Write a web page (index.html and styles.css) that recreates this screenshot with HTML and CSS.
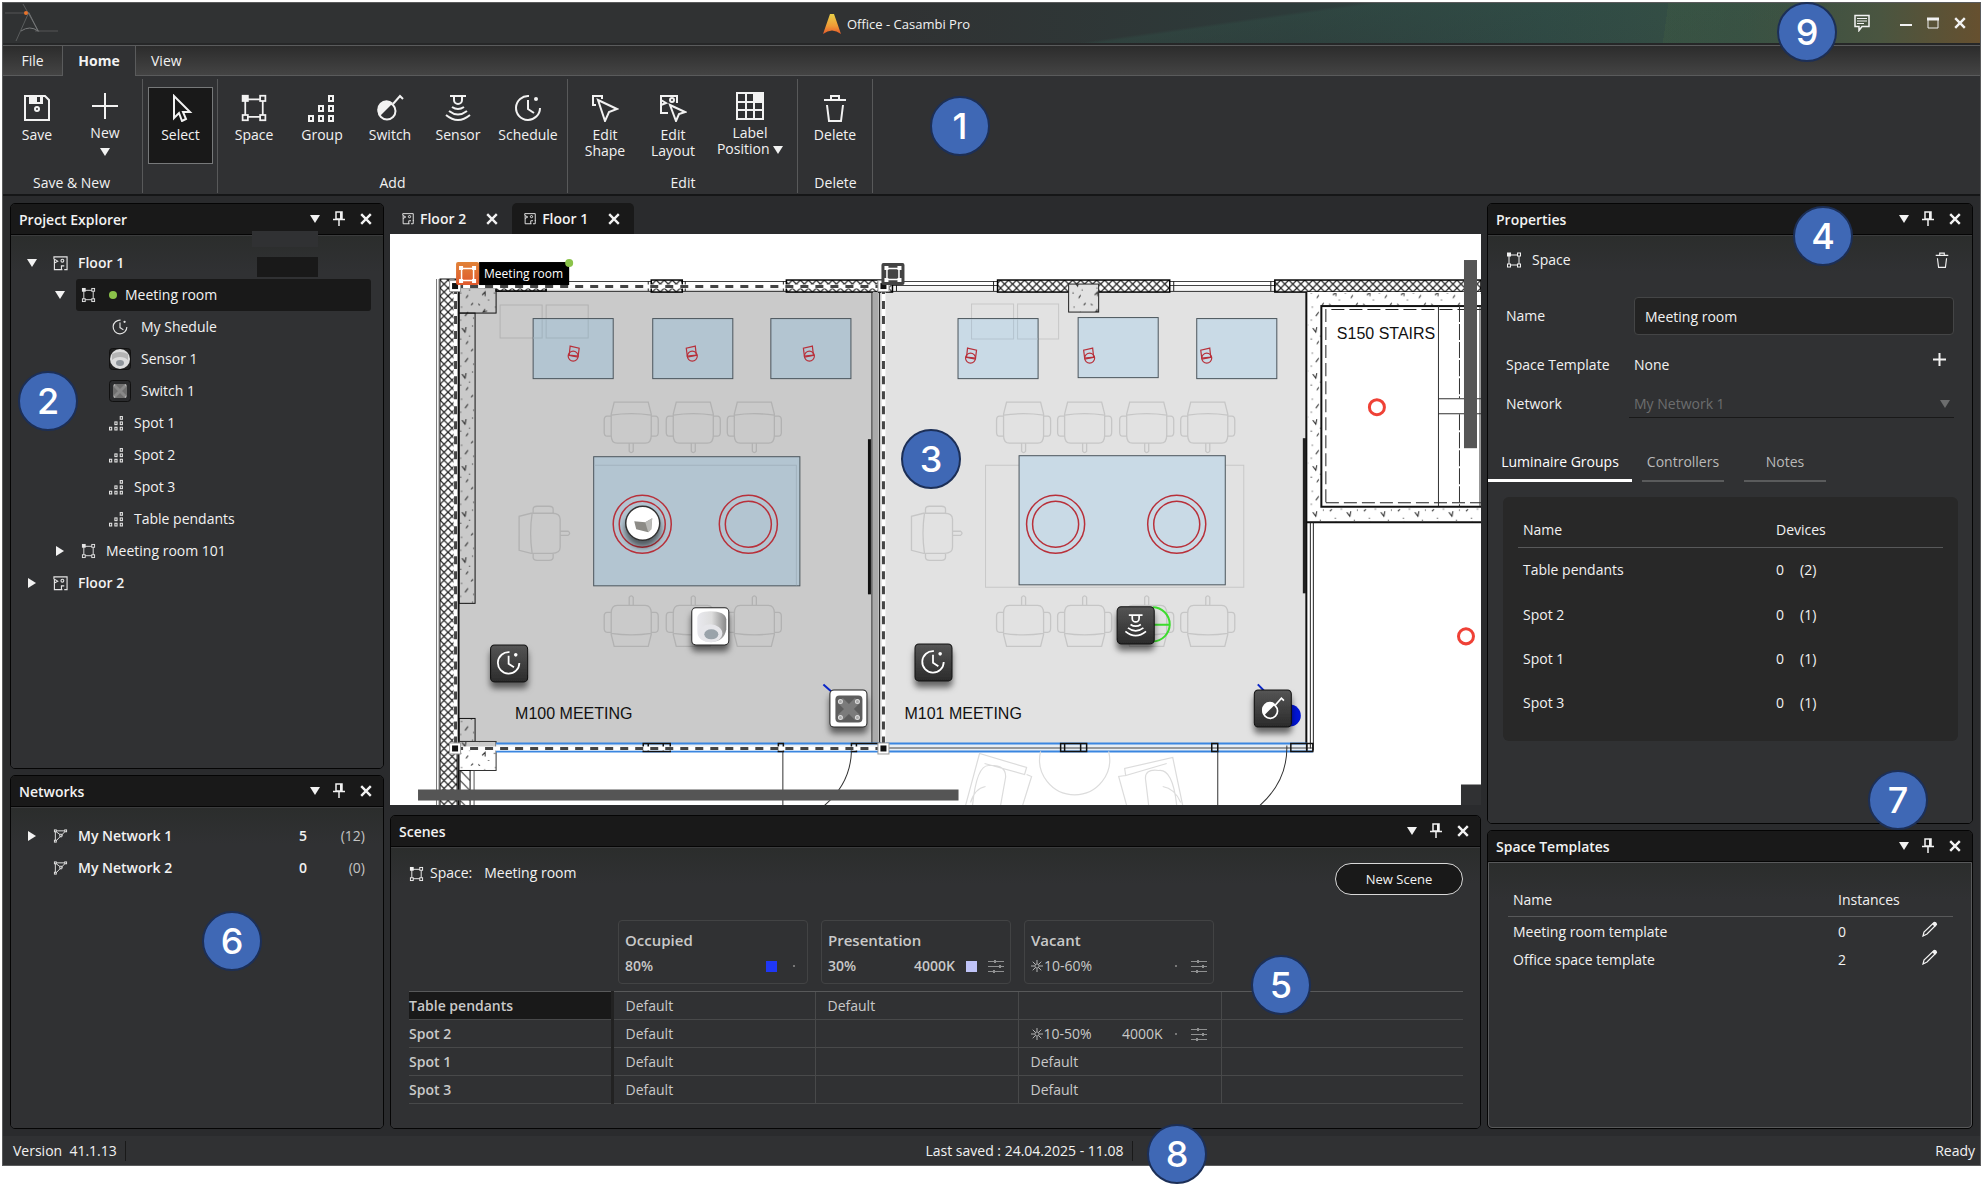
FILE: index.html
```html
<!DOCTYPE html>
<html lang="en">
<head>
<meta charset="utf-8">
<meta name="viewport" content="width=device-width, initial-scale=1">
<title>Office - Casambi Pro</title>
<link rel="stylesheet" href="styles.css">
</head>
<body>
<svg class="defs" aria-hidden="true">
  <symbol id="i-space" viewBox="0 0 16 16"><g fill="none" stroke="currentColor"><path d="M3 3H13V13H3Z" stroke-width="1"/></g><g fill="#303133" stroke="currentColor"><rect x="11.5" y="1" width="3" height="3"/><rect x="1.500" y="12" width="3" height="3"/><rect x="11.500" y="12" width="3" height="3"/></g><rect x="1" y=".5" width="4" height="4" fill="currentColor"/></symbol>
  <symbol id="i-group" viewBox="0 0 28 28"><g fill="none" stroke="currentColor" stroke-width="2"><rect x="21" y="2" width="4" height="5"/><rect x="21" y="12" width="4" height="5"/><rect x="11" y="12" width="4" height="5"/><rect x="1" y="22" width="4" height="5"/><rect x="11" y="22" width="4" height="5"/><rect x="21" y="22" width="4" height="5"/></g></symbol>
  <symbol id="i-clock" viewBox="0 0 28 28"><g fill="none" stroke="currentColor" stroke-width="2"><path d="M15 2A12 12 0 1 0 26 14"/><path d="M14 6V15L20 19"/></g><circle cx="22" cy="5" r="2" fill="currentColor"/></symbol>
  <symbol id="i-switch" viewBox="0 0 28 28"><path d="M17 9A9 9 0 1 0 4 22Z" fill="currentColor"/><circle cx="11" cy="17" r="8.500" fill="none" stroke="currentColor" stroke-width="2"/><path d="M17 10L24 2L27 5" fill="none" stroke="currentColor" stroke-width="2"/></symbol>
  <symbol id="i-sensor" viewBox="0 0 28 28"><g fill="none" stroke="currentColor" stroke-width="2"><path d="M6 2H22M10 3V6A4 4 0 0 0 18 6V3M8 13Q14 17 20 13M5 17Q14 24 23 17M2 21Q14 31 26 21"/></g></symbol>
  <symbol id="i-floor" viewBox="0 0 16 16"><g fill="none" stroke="currentColor" stroke-width="1.200"><path d="M1 4V1.500H15V11M10 15H1.500V4L5 6L1.500 8M9 15V11H12M15 10V15H12"/><circle cx="10" cy="5.500" r="1.500"/></g></symbol>
  <symbol id="i-net" viewBox="0 0 16 16"><g fill="none" stroke="currentColor"><rect x="1.500" y="1.500" width="2" height="2"/><rect x="12.500" y="1.500" width="2" height="2"/><rect x="1.500" y="12.500" width="2" height="2"/><circle cx="8.500" cy="7.500" r="1.500"/><path d="M3.500 2.500H12.500M2.500 3.500V12.500M3.500 13L12.500 3.500M3.500 3.500L7.500 6.500"/></g></symbol>
  <symbol id="i-down" viewBox="0 0 10 8"><path d="M0 0H10L5 8Z" fill="currentColor"/></symbol>
  <symbol id="i-right" viewBox="0 0 8 10"><path d="M0 0L8 5L0 10Z" fill="currentColor"/></symbol>
  <symbol id="i-pin" viewBox="0 0 12 16"><path d="M3 1H9V8H3ZM0 8.500H12M6 9V15" fill="none" stroke="currentColor" stroke-width="1.500"/><path d="M7 1H9V8H7Z" fill="currentColor"/></symbol>
  <symbol id="i-x" viewBox="0 0 10 10"><path d="M1 1L9 9M9 1L1 9" stroke="currentColor" stroke-width="2"/></symbol>
  <symbol id="i-trash" viewBox="0 0 24 28"><path d="M1 6H23M8 6V2H16V6M4 11L6 27H18L20 11" fill="none" stroke="currentColor" stroke-width="2"/></symbol>
  <symbol id="i-slid" viewBox="0 0 16 14"><path d="M0 2.500H16M0 7.500H16M0 12.500H16" stroke="currentColor"/><path d="M7 1V4M12 6V9M6 11V14" stroke="currentColor" stroke-width="2"/></symbol>
  <symbol id="i-sun" viewBox="0 0 14 14"><circle cx="7" cy="7" r="2.500" fill="none" stroke="currentColor"/><path d="M7 0V4M7 10V14M0 7H4M10 7H14M2 2L5 5M9 9L12 12M12 2L9 5M5 9L2 12" stroke="currentColor"/></symbol>
  <symbol id="i-pen" viewBox="0 0 16 16"><path d="M1 15L2 11L12 1.500Q14 1 14.500 3.500L5 13Z" fill="none" stroke="currentColor" stroke-width="1.200"/><path d="M10 3L12 1.500Q14 1 14.500 3.500L13 6Z" fill="currentColor"/></symbol>
</svg>

<div class="window">
  <header class="titlebar">
    <svg class="logo" width="56" height="40" viewBox="0 0 56 40"><g fill="none" stroke="#77797a"><path d="M2 10H26M32 28H55" opacity=".5"/><path d="M20 1L36 29M26 9L13 38" opacity=".6"/><path d="M26 10L35 28Q27 22 18 28"/></g><circle cx="23" cy="10" r="2" fill="#e8732c"/></svg>
    <div class="apptitle">
      <svg width="18" height="20" viewBox="0 0 18 20"><defs><linearGradient id="lg" x2="0" y2="1"><stop stop-color="#e8d048"/><stop offset=".6" stop-color="#ee9a36"/><stop offset="1" stop-color="#e4582b"/></linearGradient></defs><path d="M7 0H11L18 20Q9 13 0 20Z" fill="url(#lg)"/></svg>
      <span>Office - Casambi Pro</span>
    </div>
    <div class="winbtns">
      <button class="ib chat" aria-label="Feedback"><svg width="18" height="18" viewBox="0 0 18 18"><path d="M2 1.500H16V12.500H9L6 16.500V12.500H2Z" fill="none" stroke="currentColor" stroke-width="1.500"/><path d="M4 4.500H14M4 7H14M4 9.500H11" stroke="currentColor"/></svg></button>
      <button class="ib" aria-label="Minimize"><svg width="12" height="12" viewBox="0 0 12 12"><path d="M0 8H12" stroke="currentColor" stroke-width="2"/></svg></button>
      <button class="ib" aria-label="Maximize"><svg width="12" height="12" viewBox="0 0 12 12"><path d="M1 2H11V11H1Z" fill="none" stroke="currentColor"/><path d="M0 2H12" stroke="currentColor" stroke-width="3"/></svg></button>
      <button class="ib" aria-label="Close"><svg width="12" height="12"><use href="#i-x"/></svg></button>
    </div>
  </header>

  <nav class="menutabs">
    <button class="mt file">File</button><button class="mt active">Home</button><button class="mt">View</button>
  </nav>

  <div class="ribbon">
    <section class="rg g-new">
      <div class="rbs">
        <button class="rb"><svg width="28" height="28" viewBox="0 0 28 28"><path d="M2 2H22L26 6V26H2Z" fill="none" stroke="currentColor" stroke-width="2"/><path d="M6 2H20V10H6Z" fill="currentColor"/><path d="M14 3H17V8H14Z" fill="#303133"/><circle cx="14" cy="15" r="2" fill="none" stroke="currentColor" stroke-width="2"/></svg>Save</button>
        <button class="rb arrow"><svg width="28" height="28" viewBox="0 0 28 28"><path d="M14 1V27M1 14H27" stroke="currentColor" stroke-width="2"/></svg>New<svg width="10" height="8"><use href="#i-down"/></svg></button>
      </div>
      <h2>Save &amp; New</h2>
    </section>
    <section class="rg g-sel"><div class="rbs"><button class="rb picked"><svg width="28" height="28" viewBox="0 0 28 28"><path d="M7 2V24L12 19L15 27L19 25L16 18H23Z" fill="none" stroke="currentColor" stroke-width="2"/></svg>Select</button></div></section>
    <section class="rg g-add">
      <div class="rbs">
        <button class="rb"><svg width="30" height="28"><use href="#i-space"/></svg>Space</button>
        <button class="rb"><svg width="28" height="28"><use href="#i-group"/></svg>Group</button>
        <button class="rb"><svg width="28" height="28"><use href="#i-switch"/></svg>Switch</button>
        <button class="rb"><svg width="28" height="28"><use href="#i-sensor"/></svg>Sensor</button>
        <button class="rb sched"><svg width="28" height="28"><use href="#i-clock"/></svg>Schedule</button>
      </div>
      <h2>Add</h2>
    </section>
    <section class="rg g-edit">
      <div class="rbs">
        <button class="rb"><svg width="28" height="28" viewBox="0 0 28 28"><g fill="none" stroke="currentColor" stroke-width="2"><path d="M5 11H2V2H11V5"/><path d="M7 6L26 15L18 18L14 27Z"/></g></svg><span>Edit<br>Shape</span></button>
        <button class="rb"><svg width="28" height="28" viewBox="0 0 28 28"><g fill="none" stroke="currentColor" stroke-width="2"><path d="M18 9V2H2V19H9M2 6L7 9L2 11"/><circle cx="13" cy="6" r="2"/><path d="M11 11L26 18L20 20L17 27Z"/></g></svg><span>Edit<br>Layout</span></button>
        <button class="rb wide"><svg width="28" height="28" viewBox="0 0 28 28"><path d="M1 1H27V27H1ZM10 1V27M18 1V27M1 10H27M1 18H27" fill="none" stroke="currentColor" stroke-width="2"/><path d="M18 1H27V10H18Z" fill="currentColor"/></svg><span>Label<br>Position <svg width="10" height="8"><use href="#i-down"/></svg></span></button>
      </div>
      <h2>Edit</h2>
    </section>
    <section class="rg g-del"><div class="rbs"><button class="rb"><svg width="24" height="28"><use href="#i-trash"/></svg>Delete</button></div><h2>Delete</h2></section>
  </div>

  <main class="dock">
    <div class="col">
      <section class="panel grow">
        <header><h1>Project Explorer</h1><button class="ib" aria-label="Menu"><svg width="10" height="8"><use href="#i-down"/></svg></button><button class="ib" aria-label="Pin"><svg width="12" height="16"><use href="#i-pin"/></svg></button><button class="ib" aria-label="Close"><svg width="12" height="12"><use href="#i-x"/></svg></button></header>
        <div class="body tree">
          <i class="patch p1"></i><i class="patch p2"></i>
          <div class="tr l0"><svg class="ex" width="10" height="8"><use href="#i-down"/></svg><div class="tc b"><svg width="15" height="16"><use href="#i-floor"/></svg>Floor 1</div></div>
          <div class="tr l1"><svg class="ex" width="10" height="8"><use href="#i-down"/></svg><div class="tc sel"><svg width="15" height="16"><use href="#i-space"/></svg><i class="dot"></i>Meeting room</div></div>
          <div class="tr l2"><div class="tc"><svg class="wide" width="22" height="16"><use href="#i-clock"/></svg>My Shedule</div></div>
          <div class="tr l2"><div class="tc"><svg width="22" height="22" viewBox="0 0 22 22"><rect x=".5" y=".5" width="21" height="21" rx="3" fill="#222" stroke="#111"/><circle cx="11" cy="11" r="10" fill="#dcdcdc"/><path d="M3 6Q11 2 19 6V12Q16 9 11 9Q6 9 3 12Z" fill="#b4b4b4"/><ellipse cx="11" cy="15" rx="4" ry="3" fill="#8f959b"/></svg>Sensor 1</div></div>
          <div class="tr l2"><div class="tc"><svg width="22" height="22" viewBox="0 0 22 22"><rect x=".5" y=".5" width="21" height="21" rx="3" fill="#2a2b2d" stroke="#111"/><rect x="4" y="4" width="14" height="14" rx="2" fill="#6f6f6f"/><path d="M5 5L17 17M17 5L5 17" stroke="#888" stroke-width="3"/><path d="M5 5h1M16 5h1M5 17h1M16 17h1" stroke="#ccc"/></svg>Switch 1</div></div>
          <div class="tr l2"><div class="tc"><svg width="15" height="16"><use href="#i-group"/></svg>Spot 1</div></div>
          <div class="tr l2"><div class="tc"><svg width="15" height="16"><use href="#i-group"/></svg>Spot 2</div></div>
          <div class="tr l2"><div class="tc"><svg width="15" height="16"><use href="#i-group"/></svg>Spot 3</div></div>
          <div class="tr l2"><div class="tc"><svg width="15" height="16"><use href="#i-group"/></svg>Table pendants</div></div>
          <div class="tr l1"><svg class="ex" width="8" height="10"><use href="#i-right"/></svg><div class="tc"><svg width="15" height="16"><use href="#i-space"/></svg>Meeting room 101</div></div>
          <div class="tr l0"><svg class="ex" width="8" height="10"><use href="#i-right"/></svg><div class="tc b"><svg width="15" height="16"><use href="#i-floor"/></svg>Floor 2</div></div>
        </div>
      </section>
      <section class="panel networks">
        <header><h1>Networks</h1><button class="ib" aria-label="Menu"><svg width="10" height="8"><use href="#i-down"/></svg></button><button class="ib" aria-label="Pin"><svg width="12" height="16"><use href="#i-pin"/></svg></button><button class="ib" aria-label="Close"><svg width="12" height="12"><use href="#i-x"/></svg></button></header>
        <div class="body tree">
          <div class="tr l0"><svg class="ex" width="8" height="10"><use href="#i-right"/></svg><div class="tc b"><svg width="15" height="16"><use href="#i-net"/></svg>My Network 1<span class="n1">5</span><span class="n2">(12)</span></div></div>
          <div class="tr l0"><div class="tc b"><svg width="15" height="16"><use href="#i-net"/></svg>My Network 2<span class="n1">0</span><span class="n2">(0)</span></div></div>
        </div>
      </section>
    </div>

    <div class="col">
      <nav class="doctabs">
        <div class="dt"><svg width="12" height="13"><use href="#i-floor"/></svg><button class="ib">Floor 2</button><button class="ib" aria-label="Close Floor 2"><svg width="12" height="12"><use href="#i-x"/></svg></button></div>
        <div class="dt on"><svg width="12" height="13"><use href="#i-floor"/></svg><button class="ib">Floor 1</button><button class="ib" aria-label="Close Floor 1"><svg width="12" height="12"><use href="#i-x"/></svg></button></div>
      </nav>
      <div class="canvas">
        <svg viewBox="390 234 1090 571" preserveAspectRatio="xMinYMin slice">
          <defs>
            <pattern id="hatch" width="8" height="8" patternUnits="userSpaceOnUse"><rect width="8" height="8" fill="#fff"/><path d="M0 0L8 8M8 0L0 8" stroke="#222" stroke-width="1.200"/></pattern>
            <pattern id="speck" width="34" height="46" patternUnits="userSpaceOnUse"><g fill="none" stroke="#222"><path d="M3 5l2-2M8 12h1M14 3h1M6 19l3-3v4M12 24h1M2 28l2 1M9 33l-2 3l4-1M13 40h1M4 42l1 1M20 6l3 4l1-5M27 14h1M30 4h1M18 17h1M24 22l2-3M31 27l-2 2M19 31h1M26 36l-3 4M31 42h1M18 44h1"/></g></pattern>
            <pattern id="diag" width="10" height="10" patternUnits="userSpaceOnUse"><path d="M0 0L10 10" stroke="#222"/></pattern>
            <linearGradient id="tg" x2="0" y2="1"><stop stop-color="#555"/><stop offset="1" stop-color="#2b2b2b"/></linearGradient>
            <linearGradient id="og" x2="0" y2="1"><stop stop-color="#e08238"/><stop offset="1" stop-color="#e0582c"/></linearGradient>
            <linearGradient id="cy"><stop stop-color="#e9e9ee"/><stop offset=".5" stop-color="#ddd"/><stop offset="1" stop-color="#888"/></linearGradient>
            <filter id="sh" x="-30%" y="-30%" width="160%" height="180%"><feDropShadow dx="0" dy="6" stdDeviation="3" flood-opacity=".55"/></filter>
            <g id="chair" fill="none" stroke-width="1.300"><path d="M-17 1H17L20 13V34Q20 42 14 42H-14Q-20 42 -20 34V13ZM-20 14Q0 11 20 14M-20 15H-24Q-27 15 -27 19V31Q-27 35 -24 35H-20M20 15H24Q27 15 27 19V31Q27 35 24 35H20M-2 42V50Q0 53 2 50V42"/></g>
            <g id="spot" fill="none" stroke="#b8303a" stroke-width="1.200"><path d="M-4 -8L5 -6L4 2L-5 1Z"/><circle cx="-1" cy="2" r="5"/><path d="M-6 1L4 3"/></g>
            <g id="tile"><rect x=".5" y=".5" width="37" height="37" rx="4" fill="url(#tg)" stroke="#111" filter="url(#sh)"/></g>
            <g id="wtile"><rect x=".5" y=".5" width="37" height="37" rx="4" fill="#fff" stroke="#222" filter="url(#sh)"/></g>
            <g id="hd"><rect x="-5.500" y="-5.500" width="11" height="11" fill="#fff" stroke="#999"/><rect x="-3" y="-3" width="6" height="6" fill="#111"/></g>
          </defs>
          <rect x="390" y="234" width="1090" height="571" fill="#fff"/>
          <rect x="456" y="286" width="427" height="462" fill="#cacaca"/>
          <rect x="883" y="286" width="422" height="462" fill="#e2e2e2"/>

          <path d="M436.500 279V805M439 279V805" stroke="#777" fill="none"/>
          <path d="M440 279H457V805H440Z" fill="url(#hatch)" stroke="#111"/>
          <path d="M458.500 290V805" stroke="#111" stroke-width="2"/>
          <g stroke="#111" fill="url(#speck)"><rect x="459" y="288" width="37" height="25"/><rect x="459" y="313" width="16" height="290"/><rect x="459" y="718" width="16" height="23"/></g>
          <rect x="459" y="750" width="37" height="20" fill="#fff"/><rect x="459" y="741" width="37" height="29" fill="url(#speck)" stroke="#333"/>
          <rect x="460" y="770" width="10" height="35" fill="url(#diag)" stroke="#111"/><path d="M474 770V805" stroke="#555"/>

          <rect x="496" y="282" width="779" height="8" fill="#fff" opacity=".7"/>
          <path d="M496 281.500H1275M496 285.500H1275M496 291.500H1275" stroke="#444" fill="none"/>
          <g fill="url(#hatch)" stroke="#000" stroke-width="1.500"><rect x="496" y="285" width="50" height="6"/><rect x="651" y="280" width="31" height="12"/><rect x="786" y="280" width="106" height="12"/><rect x="997" y="280" width="172" height="12"/><rect x="1274" y="280" width="206" height="12"/></g>
          <path d="M648 281V291M685 281V291M783 281V291M896 281V291M993 281V291M1173 281V291M1270 281V291" stroke="#222"/>
          <rect x="1068" y="284" width="30" height="28" fill="#e2e2e2"/><rect x="1068" y="284" width="30" height="28" fill="url(#speck)" stroke="#222"/>

          <path d="M871.500 292V748M879 292V748" stroke="#222"/><path d="M875 292V748" stroke="#aaa" stroke-width="5"/>
          <path d="M869 439V594" stroke="#111" stroke-width="3"/><path d="M1303.500 438V593" stroke="#222" stroke-width="3"/>

          <g fill="none" stroke="#b2b2b2"><path d="M500 305H542V338H500ZM546 305H588V338H546Z"/></g>
          <g fill="#b3c5d1" stroke="#4b555c"><rect x="533" y="318.500" width="80" height="60"/><rect x="652.500" y="318.500" width="80" height="60"/><rect x="770.500" y="318.500" width="80" height="60"/><rect x="593.500" y="456.500" width="206" height="129"/></g>
          <path d="M533 338H542V319M546 319V338H588V319M594 465H796V585" fill="none" stroke="#a2b3be"/>
          <g fill="none" stroke="#c8c8c8"><path d="M971 304H1013V339H971ZM1017 304H1058V339H1017ZM985 465H1243V587H985Z"/></g>
          <g fill="#c9dae6" stroke="#4b555c"><rect x="957.500" y="318.500" width="80" height="60"/><rect x="1077.500" y="317.500" width="80" height="60"/><rect x="1196" y="318.500" width="80" height="60"/><rect x="1018.500" y="455.500" width="206" height="129"/></g>
          <path d="M971 319V339H1013V319M1017 319V339H1037" fill="none" stroke="#b5c4cf"/>
          <use href="#spot" x="574" y="354"/><use href="#spot" transform="translate(691 354) scale(-1 1)"/><use href="#spot" transform="translate(808 354) scale(-1 1)"/>
          <use href="#spot" x="971" y="356"/><use href="#spot" transform="translate(1088 356) scale(-1 1)"/><use href="#spot" transform="translate(1205 356) scale(-1 1)"/>
          <g stroke="#b2b2b2"><use href="#chair" x="631" y="401"/><use href="#chair" x="693" y="401"/><use href="#chair" x="754" y="401"/><use href="#chair" transform="translate(631 647) scale(1 -1)"/><use href="#chair" transform="translate(693 647) scale(1 -1)"/><use href="#chair" transform="translate(754 647) scale(1 -1)"/><use href="#chair" transform="translate(518 533) rotate(-90)"/></g>
          <g stroke="#c6c6c6"><use href="#chair" x="1023" y="401"/><use href="#chair" x="1084" y="401"/><use href="#chair" x="1146" y="401"/><use href="#chair" x="1207" y="401"/><use href="#chair" transform="translate(1023 647) scale(1 -1)"/><use href="#chair" transform="translate(1084 647) scale(1 -1)"/><use href="#chair" transform="translate(1146 647) scale(1 -1)"/><use href="#chair" transform="translate(1207 647) scale(1 -1)"/><use href="#chair" transform="translate(910 533) rotate(-90)"/></g>
          <g fill="none" stroke="#b8303a" stroke-width="1.500"><circle cx="642" cy="524" r="29"/><circle cx="642" cy="524" r="23"/><circle cx="748" cy="524" r="29"/><circle cx="748" cy="524" r="23"/><circle cx="1055" cy="524" r="29"/><circle cx="1055" cy="524" r="23"/><circle cx="1176" cy="524" r="29"/><circle cx="1176" cy="524" r="23"/></g>

          <path d="M1306 292H1480V522H1306Z" fill="#fff"/>
          <g fill="url(#speck)"><rect x="1309" y="293" width="171" height="13"/><rect x="1307" y="306" width="13" height="200"/><rect x="1309" y="507" width="171" height="14"/></g>
          <rect x="1320.500" y="306" width="170" height="200.500" fill="#fff" stroke="#111" stroke-width="2"/>
          <path d="M1325 502V309.500H1480M1325 502.500H1480" fill="none" stroke="#222" stroke-dasharray="13 5"/>
          <path d="M1437.500 306V506M1437 398.500H1480M1437 413.500H1480M1479 306V506" fill="none" stroke="#333"/><path d="M1458.500 306V398M1458.500 414V506" stroke="#333" stroke-dasharray="16 2"/>
          <path d="M1305.500 292V750M1305 522H1480" stroke="#111" stroke-width="2" fill="none"/>
          <path d="M1309.500 522V748M1312.500 522V750" stroke="#222"/>
          <g fill="none" stroke="#ef4136" stroke-width="3"><circle cx="1376" cy="407" r="7.500"/><circle cx="1465" cy="636" r="7.500"/></g>

          <rect x="496" y="743" width="809" height="8" fill="#e8eef4"/>
          <path d="M883 747.500H1312" stroke="#444"/><path d="M496 743H1306M496 751H1312" stroke="#3a86e0" stroke-width="2"/>
          <g fill="none" stroke="#111" stroke-width="1.500"><path d="M643 743H670V751H643ZM648 743V751M663 743V751M778 743H783V751H778ZM851 743H856V751H851ZM856 743H883M1060 743H1086V751H1060ZM1064 743V751M1080 743V751M1211 743H1217V751H1211ZM1290 743H1312V751H1290ZM1306 743V751"/></g>
          <path d="M782.500 751V805M851 751Q850 783 824 805M1217 751V805M1286 745Q1287 780 1259 805" fill="none" stroke="#333"/>
          <g fill="none" stroke="#dcdcdc" stroke-width="1.200"><path d="M1040 751A35 35 0 1 0 1108 751M965 805L979 753L1026 767L1024 774L984 763M1026 774L1031 776L1022 805M972 805Q976 765 988 765Q1006 764 1005 777L1000 805M970 802Q974 788 985 786"/><path d="M1182 805L1172 757L1124 768L1125 775L1166 763M1125 775L1118 776L1126 805M1176 805Q1172 768 1158 770Q1143 768 1145 780L1148 805M1180 802Q1174 788 1162 786"/></g>

          <path d="M455 286.500H883M455 748H883M455.500 286V748M883 286V748" fill="none" stroke="#fff" stroke-width="4"/>
          <path d="M455 286.500H883M455 748H883M455.500 286V748M883 286V748" fill="none" stroke="#444" stroke-width="3" stroke-dasharray="8 7"/>
          <use href="#hd" x="455" y="286"/><use href="#hd" x="883" y="286"/><use href="#hd" x="455" y="748"/><use href="#hd" x="883" y="748"/>

          <g font-family="Liberation Sans, Arial, sans-serif" font-size="16" fill="#111"><text x="515" y="719">M100 MEETING</text><text x="904" y="719">M101 MEETING</text><text x="1336" y="339">S150 STAIRS</text></g>

          <rect x="479" y="262" width="90" height="23" fill="#000"/><rect x="456" y="262" width="23" height="23" rx="2" fill="url(#og)"/>
          <rect x="881" y="263" width="23" height="22" rx="2" fill="#444"/>
          <g fill="none" stroke="#fff"><path d="M461.500 268.500H473.500V280.500H461.500ZM886.500 268.500H898.500V279.500H886.500Z" stroke-width="1.500"/></g>
          <g fill="#fff"><path d="M459 266h4v4h-4ZM472 266h4v4h-4ZM459 279h4v4h-4ZM472 279h4v4h-4ZM884 266h4v4h-4ZM897 266h4v4h-4ZM884 278h4v4h-4ZM897 278h4v4h-4Z"/></g>
          <text x="484" y="278" font-family="Open Sans, sans-serif" font-size="12" fill="#fff">Meeting room</text>
          <circle cx="569" cy="263" r="4" fill="#8bc34a"/>

          <circle cx="642.500" cy="523" r="17" fill="#fff" stroke="#333" stroke-width="1.500" filter="url(#sh)"/><path d="M634 521L645 522L652 518L651 529L648 532L636 529Z" fill="#8c8b86"/><path d="M645 522L652 518L651 529L648 532Z" fill="#b9b9b6"/>
          <use href="#wtile" x="691" y="607"/><g transform="translate(691 607)"><path d="M6 11Q6 4 19 4Q34 4 35 12V22Q33 34 20 35Q6 34 6 24Z" fill="url(#cy)"/><ellipse cx="19" cy="26" rx="12" ry="9" fill="#e6e6ea"/><ellipse cx="20" cy="27" rx="7" ry="5" fill="#9aa3aa"/></g>
          <path d="M823 684L832 692M1257 684L1263 690" stroke="#0b26c8" stroke-width="2"/>
          <use href="#wtile" x="829" y="689"/><g transform="translate(829 689)"><rect x="6" y="6" width="27" height="27" rx="4" fill="#5d5d5d"/><path d="M11 11L28 28M28 11L11 28" stroke="#7b7b7b" stroke-width="7"/><g fill="#aaa" stroke="#ddd"><circle cx="11" cy="12" r="2"/><circle cx="28" cy="12" r="2"/><circle cx="11" cy="28" r="2"/><circle cx="28" cy="28" r="2"/></g></g>
          <path d="M1152 607A17 17 0 0 1 1152 641M1150 624.500H1170" fill="none" stroke="#3ddc2e" stroke-width="2"/><circle cx="1289" cy="715" r="11" fill="#0014d8"/>
          <use href="#tile" x="490" y="644"/><use href="#tile" x="914" y="643"/><use href="#tile" x="1116" y="606"/><use href="#tile" x="1253" y="689"/>
          <g color="#fff"><use href="#i-clock" x="496" y="650" width="25" height="25"/><use href="#i-clock" x="920" y="649" width="25" height="25"/><use href="#i-sensor" x="1123" y="613" width="24" height="24"/><use href="#i-switch" x="1260" y="696" width="24" height="24"/></g>

          <g fill="#555"><rect x="418" y="789" width="540" height="11"/><rect x="1463" y="260" width="13" height="188"/></g>
          <rect x="1460" y="784" width="20" height="21" fill="#303133"/>
        </svg>
      </div>
      <section class="panel scenes">
        <header><h1>Scenes</h1><button class="ib" aria-label="Menu"><svg width="10" height="8"><use href="#i-down"/></svg></button><button class="ib" aria-label="Pin"><svg width="12" height="16"><use href="#i-pin"/></svg></button><button class="ib" aria-label="Close"><svg width="12" height="12"><use href="#i-x"/></svg></button></header>
        <div class="body">
          <div class="schead"><svg width="15" height="16"><use href="#i-space"/></svg><span>Space:</span><span class="spname">Meeting room</span><button class="pill">New Scene</button></div>
          <table class="sct">
            <thead><tr><td></td>
              <th><div class="card"><div class="ct">Occupied</div><div class="cv"><b>80%</b><i class="sw blue"></i><i class="pt"></i></div></div></th>
              <th><div class="card"><div class="ct">Presentation</div><div class="cv"><b>30%</b><b class="k">4000K</b><i class="sw lil"></i><svg width="16" height="14"><use href="#i-slid"/></svg></div></div></th>
              <th><div class="card"><div class="ct">Vacant</div><div class="cv"><svg class="sun" width="12" height="14"><use href="#i-sun"/></svg>10-60%<i class="pt v"></i><svg width="16" height="14"><use href="#i-slid"/></svg></div></div></th><td></td></tr></thead>
            <tbody>
              <tr><th class="cur">Table pendants</th><td>Default</td><td>Default</td><td></td><td></td></tr>
              <tr><th>Spot 2</th><td>Default</td><td></td><td><div class="cv"><svg class="sun" width="12" height="14"><use href="#i-sun"/></svg>10-50%<span class="k">4000K</span><i class="pt v2"></i><svg width="16" height="14"><use href="#i-slid"/></svg></div></td><td></td></tr>
              <tr><th>Spot 1</th><td>Default</td><td></td><td>Default</td><td></td></tr>
              <tr><th>Spot 3</th><td>Default</td><td></td><td>Default</td><td></td></tr>
            </tbody>
          </table>
        </div>
      </section>
    </div>

    <div class="col">
      <section class="panel grow">
        <header><h1>Properties</h1><button class="ib" aria-label="Menu"><svg width="10" height="8"><use href="#i-down"/></svg></button><button class="ib" aria-label="Pin"><svg width="12" height="16"><use href="#i-pin"/></svg></button><button class="ib" aria-label="Close"><svg width="12" height="12"><use href="#i-x"/></svg></button></header>
        <div class="body props">
          <div class="ph"><svg width="16" height="16"><use href="#i-space"/></svg><span>Space</span><button class="ib" aria-label="Delete space"><svg width="14" height="16"><use href="#i-trash"/></svg></button></div>
          <div class="form">
            <label for="nm">Name</label><input id="nm" type="text" value="Meeting room">
            <span>Space Template</span><div class="none">None<button class="ib" aria-label="Add template"><svg width="13" height="13" viewBox="0 0 13 13"><path d="M6.500 0V13M0 6.500H13" stroke="currentColor" stroke-width="2"/></svg></button></div>
            <label for="nw">Network</label><div class="selw"><select id="nw" disabled><option>My Network 1</option></select><svg width="10" height="8"><use href="#i-down"/></svg></div>
          </div>
          <div class="ptabs"><button class="on">Luminaire Groups</button><button>Controllers</button><button>Notes</button></div>
          <div class="box"><table><thead><tr><th>Name</th><th>Devices</th></tr></thead><tbody><tr><td>Table pendants</td><td>0<span>(2)</span></td></tr><tr><td>Spot 2</td><td>0<span>(1)</span></td></tr><tr><td>Spot 1</td><td>0<span>(1)</span></td></tr><tr><td>Spot 3</td><td>0<span>(1)</span></td></tr></tbody></table></div>
        </div>
      </section>
      <section class="panel templates">
        <header><h1>Space Templates</h1><button class="ib" aria-label="Menu"><svg width="10" height="8"><use href="#i-down"/></svg></button><button class="ib" aria-label="Pin"><svg width="12" height="16"><use href="#i-pin"/></svg></button><button class="ib" aria-label="Close"><svg width="12" height="12"><use href="#i-x"/></svg></button></header>
        <div class="body"><table><thead><tr><th>Name</th><th>Instances</th><th></th></tr></thead><tbody><tr><td>Meeting room template</td><td>0</td><td><button class="ib" aria-label="Edit"><svg width="16" height="16"><use href="#i-pen"/></svg></button></td></tr><tr><td>Office space template</td><td>2</td><td><button class="ib" aria-label="Edit"><svg width="16" height="16"><use href="#i-pen"/></svg></button></td></tr></tbody></table></div>
      </section>
    </div>
  </main>

  <footer class="status"><span class="ver">Version&nbsp; 41.1.13</span><span class="saved">Last saved : 24.04.2025 - 11.08</span><span class="ready">Ready</span></footer>

  <div class="callout c1">1</div><div class="callout c2">2</div><div class="callout c3">3</div><div class="callout c4">4</div><div class="callout c5">5</div><div class="callout c6">6</div><div class="callout c7">7</div><div class="callout c8">8</div><div class="callout c9">9</div>
</div>
</body>
</html>
```
FILE: styles.css
```css
* { box-sizing: border-box; }
html { height: 100%; }
body { margin: 0; min-height: 100%; padding: 2px 4px 20px 2px; background: #fff; display: flex; font: 14px/20px "Open Sans", "Noto Sans", sans-serif; color: #f2f2f2; }
button { font: inherit; color: inherit; background: none; border: 0; padding: 0; margin: 0; }
svg { flex: none; }
h1, h2 { margin: 0; font-size: 14px; font-weight: 400; }
table { border-collapse: collapse; }
th { font-weight: 400; text-align: left; }
.defs { position: absolute; width: 0; height: 0; }
.window { position: relative; flex: 1; min-width: 0; display: flex; flex-direction: column; background: #2a2b2d; border: 1px solid #5a5b5c; }
.ib { display: inline-flex; align-items: center; justify-content: center; }

.titlebar { height: 42px; display: grid; grid-template-columns: 82fr auto 101fr; align-items: center; border-bottom: 2px solid #262728;
  background: linear-gradient(98deg, transparent 84%, rgba(75, 105, 65, .2) 84%, rgba(60, 80, 60, .15) 92%, transparent 92%), linear-gradient(172deg, transparent 60%, rgba(50, 85, 75, .35) 61%, transparent 85%), linear-gradient(90deg, #303233 45%, #2d3b3a 65%, #2f4843 78%, #364f44 88%, #4a5540 95%, #66502f 100%); }
.apptitle { display: flex; align-items: center; gap: 6px; padding-top: 2px; font-size: 13px; }
.winbtns { display: flex; justify-content: flex-end; align-items: center; gap: 15px; padding-right: 14px; }
.chat { margin-right: 14px; }

.menutabs { height: 31px; display: flex; background: linear-gradient(#2c2c2c, #444); border-top: 1px solid #5a5b5c; border-bottom: 1px solid #5a5b5c; }
.mt { padding: 0 15px; }
.mt.file { width: 59px; padding: 0; }
.mt.active { width: 74px; padding: 0; font-weight: 700; background: #303133; border: solid #5a5b5c; border-width: 0 1px; margin-bottom: -1px; }

.ribbon { height: 120px; display: flex; background: #303133; border-bottom: 2px solid #151617; padding: 3px 0 1px; }
.rg { display: flex; flex-direction: column; border-right: 1px solid #58595a; padding: 8px 2px 0; }
.rg h2 { margin-top: auto; height: 20px; text-align: center; line-height: 20px; }
.rbs { display: flex; }
.rb { width: 68px; height: 77px; display: flex; flex-direction: column; align-items: center; line-height: 16px; padding-top: 7px; }
.rb > svg:first-child { margin-bottom: 5px; }
.rb.arrow > svg:first-child, .rb.wide > svg:first-child { margin: -2px 0 5px; }
.rb.arrow > svg:last-child { margin-top: 7px; }
.rb.wide { width: 86px; }
.rb.sched { width: 72px; }
.rb.picked { width: 65px; background: #191919; border: 1px solid #77797a; padding-top: 6px; }
.g-new { width: 140px; padding-left: 0; }
.g-sel { width: 75px; padding-left: 5px; }
.g-add { width: 350px; }
.g-edit { width: 230px; padding-left: 3px; }
.g-del { width: 75px; padding-left: 3px; }

.dock { flex: 1; min-height: 0; display: grid; grid-template-columns: 374px minmax(0, 1fr) 486px; column-gap: 6px; padding: 7px; }
.col { display: flex; flex-direction: column; gap: 6px; min-width: 0; min-height: 0; }
.panel { border: 1px solid #050505; border-radius: 5px; display: flex; flex-direction: column; background: #303133; overflow: hidden; }
.panel > header { height: 31px; flex: none; display: flex; align-items: center; background: #191919; border-bottom: 1px solid #050505; padding: 2px 11px 0 8px; }
.panel h1 { font-weight: 600; flex: 1; }
.panel > header .ib { margin-bottom: 3px; }
.panel > header .ib + .ib { margin-left: 13px; }
.panel > header .ib:last-child { margin-left: 15px; }
.body { position: relative; flex: 1; background: linear-gradient(#2b2d2c, #303133 36px); border-top: 1px solid #3b3c3d; }
.grow { flex: 1; }
.networks { height: 354px; }
.scenes { height: 314px; margin-top: 4px; }
.templates { height: 299px; }
.templates .body { border: 1px solid #58595a; border-radius: 0 0 4px 4px; }

.tree { padding: 11px 12px 0 11px; }
.networks .tree { padding-top: 12px; }
.tr { display: flex; align-items: center; height: 32px; }
.ex { width: 20px; margin-right: -20px; }
.tc { position: relative; margin-left: 26px; padding-left: 5px; height: 32px; flex: 1; display: flex; align-items: center; gap: 10px; border-radius: 3px; }
.tc svg { color: #e4e4e4; }
.l1 { padding-left: 28px; }
.l2 { padding-left: 56px; }
.b { font-weight: 600; }
.sel { background: #191919; }
.dot { width: 8px; height: 8px; border-radius: 50%; background: #8bc34a; margin: 0 -2px 0 3px; }
.patch { position: absolute; left: 241px; width: 66px; top: -5px; height: 16px; background: #303133; }
.p2 { left: 246px; width: 61px; top: 21px; height: 20px; background: #191919; }
.n1 { margin-left: auto; }
.n2 { width: 48px; margin-right: 6px; text-align: right; font-weight: 400; color: #c4c4c4; }

.doctabs { display: flex; height: 31px; margin-bottom: -6px; flex: none; }
.dt { display: flex; align-items: center; gap: 6px; padding: 0 14px 0 12px; font-weight: 600; }
.dt > .ib:last-child { margin-left: 14px; }
.dt.on { background: #191919; border-radius: 5px 5px 0 0; }
.canvas { flex: 1; min-height: 0; position: relative; background: #fff; overflow: hidden; }
.canvas > svg { position: absolute; width: 100%; height: 100%; display: block; }

.scenes .body { padding: 15px 17px 0 18px; color: #c9c9c9; }
.schead { display: flex; height: 33px; gap: 6px; color: #f2f2f2; }
.schead > svg { margin-top: 3px; }
.spname { margin-left: 6px; }
.pill { margin-left: auto; width: 128px; height: 32px; border: 1px solid #d8d8d8; border-radius: 16px; background: #191919; font-size: 13px; }
.sct { width: 100%; table-layout: fixed; margin-top: 24px; }
.sct td, .sct th { height: 28px; padding: 0 0 0 12px; border: solid #48494a; border-width: 1px 0; border-right: 1px solid #48494a; line-height: 20px; }
.sct td:last-child { border-right: 0; }
.sct th { font-weight: 600; padding-left: 0; }
.sct tbody th { border-right: 3px solid #222; }
.sct thead td, .sct thead th { width: 203px; height: 71px; border-width: 0; border-bottom: 1px solid #58595a; padding: 0 7px 7px 6px; }
.sct thead td:last-child { width: auto; }
.sct tbody .cur { background: #191919; }
.card { height: 64px; border: 1px solid #424344; border-radius: 4px; padding: 9px 6px 0; }
.ct { font-size: 15px; height: 20px; }
.cv { display: flex; align-items: center; height: 20px; font-weight: 400; }
.card .cv { margin-top: 6px; }
.cv b { font-weight: 600; }
.cv .k { margin-left: auto; }
.cv > svg:last-child { margin-left: 11px; color: #8f9091; }
.sun { margin-right: 1px; }
.sw { width: 11px; height: 11px; margin-left: 11px; background: #c0c4f8; }
.sw.blue { margin-left: auto; background: #1f37f5; }
.pt { width: 2px; height: 2px; background: #777; margin: 0 6px 0 16px; }
.pt.v { margin: 0 3px 0 auto; }
.pt.v2 { margin: 0 3px 0 12px; }
.sct td .cv { padding-right: 14px; }

.props .ph { display: flex; align-items: center; gap: 10px; height: 32px; margin-top: 8px; padding: 0 23px 0 18px; }
.ph .ib { margin-left: auto; }
.form { display: grid; grid-template-columns: 128px 1fr; grid-template-rows: 38px 60px 18px; align-items: center; padding: 21px 18px 0 18px; }
.form input { height: 38px; width: 100%; background: #232323; border: 1px solid #444546; border-radius: 4px; color: inherit; font: inherit; padding: 0 10px; }
.none { display: flex; }
.none .ib { margin: -12px 8px 0 auto; }
.selw { position: relative; margin-left: -5px; border-bottom: 1px solid #191919; height: 28px; display: flex; align-items: center; color: #6c6d6e; padding-right: 4px; }
.selw select { flex: 1; appearance: none; background: none; border: 0; font: inherit; color: inherit; opacity: 1; padding: 0 0 0 5px; }
.ptabs { display: flex; margin-top: 31px; height: 38px; color: #b9b9b9; }
.ptabs button { width: 82px; margin-right: 20px; border-bottom: 2px solid #5a5b5c; }
.ptabs button.on { width: 144px; margin-right: 10px; border-bottom: 3px solid #fff; color: #fff; }
.box { margin: 15px 14px 0 15px; height: 244px; background: #282828; border-radius: 6px; padding: 16px 15px 0; }
.box table, .templates table { width: 100%; table-layout: fixed; }
.box th { height: 34px; border-bottom: 1px solid #58595a; padding: 0 0 0 5px; }
.box td { height: 44px; padding: 0 0 0 5px; }
.box tr > :last-child { width: 172px; }
.box tbody tr:first-child td { height: 46px; }
.box span { margin-left: 16px; }
.templates .body { padding: 21px 18px 0 19px; }
.templates th { height: 32px; border-bottom: 1px solid #58595a; padding: 0 0 0 5px; }
.templates td { height: 28px; padding: 4px 0 0 5px; line-height: 20px; }
.templates th:nth-child(2) { width: 84px; }
.templates th:nth-child(3) { width: 36px; padding: 0; }
.templates td:last-child { padding: 3px 0 0 5px; }

.status { height: 29px; display: grid; grid-template-columns: 1fr auto 1fr; align-items: center; background: #303133; padding: 0 5px 0 10px; }
.ver { justify-self: start; border-right: 1px solid #191919; padding-right: 8px; }
.saved { border-right: 1px solid #191919; padding-right: 8px; margin-left: 70px; }
.ready { justify-self: end; }

.callout { position: absolute; width: 60px; height: 60px; border-radius: 50%; background: #3f68b5; border: 2px solid #1c2f57; color: #fff; font: 500 36px/56px Inter, sans-serif; text-align: center; }
.c1 { left: 927px; top: 93px; }
.c2 { left: 15px; top: 368px; }
.c3 { left: 898px; top: 426px; }
.c4 { right: 127px; top: 203px; }
.c5 { left: 1248px; bottom: 150px; }
.c6 { left: 199px; bottom: 194px; }
.c7 { right: 52px; bottom: 335px; }
.c8 { left: 1144px; bottom: -19px; }
.c9 { right: 143px; top: -1px; }
```
